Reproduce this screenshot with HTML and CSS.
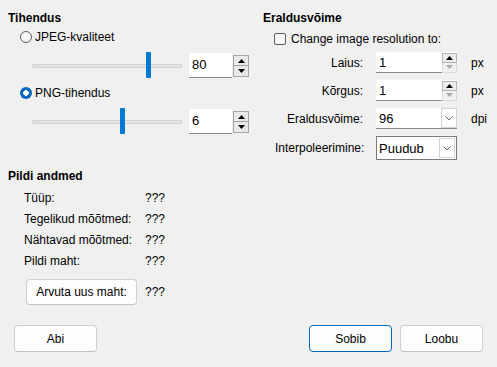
FILE: index.html
```html
<!DOCTYPE html>
<html>
<head>
<meta charset="utf-8">
<link rel="stylesheet" href="styles.css">
</head>
<body>
<div class="dlg">
  <div class="top">
    <section class="col">
      <div class="title">Tihendus</div>
      <div class="opt-row"><span class="radio"></span><span>JPEG-kvaliteet</span></div>
      <div class="slider-row">
        <div class="slider"><div class="track"></div><div class="thumb" style="left:114px"></div></div>
        <div class="spin">
          <div class="field">80</div>
          <div class="spin-btns">
            <span class="sb"><svg width="7" height="4" viewBox="0 0 7 4"><path d="M0 4 L3.5 0 L7 4 Z" fill="#000"/></svg></span>
            <span class="sb"><svg width="7" height="4" viewBox="0 0 7 4"><path d="M0 0 L3.5 4 L7 0 Z" fill="#000"/></svg></span>
          </div>
        </div>
      </div>
      <div class="opt-row"><span class="radio on"></span><span>PNG-tihendus</span></div>
      <div class="slider-row">
        <div class="slider"><div class="track"></div><div class="thumb" style="left:88px"></div></div>
        <div class="spin">
          <div class="field">6</div>
          <div class="spin-btns">
            <span class="sb"><svg width="7" height="4" viewBox="0 0 7 4"><path d="M0 4 L3.5 0 L7 4 Z" fill="#000"/></svg></span>
            <span class="sb"><svg width="7" height="4" viewBox="0 0 7 4"><path d="M0 0 L3.5 4 L7 0 Z" fill="#000"/></svg></span>
          </div>
        </div>
      </div>
    </section>
    <section class="col right">
      <div class="title">Eraldusvõime</div>
      <div class="opt-row chk-row"><span class="check"></span><span>Change image resolution to:</span></div>
      <div class="res-grid">
        <span class="lbl">Laius:</span>
        <div class="rfield"><span class="val">1</span>
          <div class="rspin">
            <span class="rb"><svg width="7" height="4" viewBox="0 0 7 4"><path d="M0 4 L3.5 0 L7 4 Z" fill="#000"/></svg></span>
            <span class="rb dis"><svg width="7" height="4" viewBox="0 0 7 4"><path d="M0 0 L3.5 4 L7 0 Z" fill="#a8a8a8"/></svg></span>
          </div>
        </div>
        <span class="unit">px</span>

        <span class="lbl">Kõrgus:</span>
        <div class="rfield"><span class="val">1</span>
          <div class="rspin">
            <span class="rb"><svg width="7" height="4" viewBox="0 0 7 4"><path d="M0 4 L3.5 0 L7 4 Z" fill="#000"/></svg></span>
            <span class="rb dis"><svg width="7" height="4" viewBox="0 0 7 4"><path d="M0 0 L3.5 4 L7 0 Z" fill="#a8a8a8"/></svg></span>
          </div>
        </div>
        <span class="unit">px</span>

        <span class="lbl">Eraldusvõime:</span>
        <div class="rfield combo"><span class="val">96</span>
          <span class="drop"><svg width="8" height="5" viewBox="0 0 8 5"><path d="M0.5 0.5 L4 4 L7.5 0.5" fill="none" stroke="#606060" stroke-width="1"/></svg></span>
        </div>
        <span class="unit">dpi</span>

        <span class="lbl">Interpoleerimine:</span>
        <div class="rfield combo boxed"><span class="val">Puudub</span>
          <span class="drop"><svg width="8" height="5" viewBox="0 0 8 5"><path d="M0.5 0.5 L4 4 L7.5 0.5" fill="none" stroke="#606060" stroke-width="1"/></svg></span>
        </div>
        <span class="unit"></span>
      </div>
    </section>
  </div>

  <section class="info">
    <div class="title">Pildi andmed</div>
    <div class="info-grid">
      <span>Tüüp:</span><span>???</span>
      <span>Tegelikud mõõtmed:</span><span>???</span>
      <span>Nähtavad mõõtmed:</span><span>???</span>
      <span>Pildi maht:</span><span>???</span>
    </div>
    <div class="calc-row">
      <button class="btn calc">Arvuta uus maht:</button>
      <span>???</span>
    </div>
  </section>

  <div class="footer">
    <button class="btn">Abi</button>
    <div class="spacer"></div>
    <button class="btn default">Sobib</button>
    <button class="btn">Loobu</button>
  </div>
</div>
</body>
</html>
```

FILE: styles.css
```css
* { box-sizing: border-box; }

body {
  margin: 0;
  background: #f0f0f0;
  font: 12px "Liberation Sans", Arial, sans-serif;
  color: #000;
}

.dlg {
  width: 497px;
  height: 367px;
  padding: 10px 14px 0 8px;
  display: flex;
  flex-direction: column;
}

.top {
  display: grid;
  grid-template-columns: 254px 1fr;
  height: 150px;
}

.col {
  display: flex;
  flex-direction: column;
}

.title {
  font-weight: bold;
  line-height: 16px;
  height: 16px;
}

.right .title { margin-left: 1px; }

.opt-row {
  display: flex;
  align-items: center;
  height: 16px;
  margin: 3px 0 0 12px;
  gap: 3px;
  line-height: 16px;
}

.radio {
  width: 12px;
  height: 12px;
  border-radius: 50%;
  border: 1px solid #5c5c5c;
  background: #f6f6f6;
  flex: none;
}

.radio.on {
  border: none;
  background: radial-gradient(circle, #fff 0 2.6px, #0067c0 3px);
}

.slider-row {
  display: flex;
  height: 26px;
  margin-top: 7px;
  padding-left: 24px;
}

.opt-row + .slider-row { margin-top: 7px; }
.slider-row + .opt-row { margin-top: 7px; }

.slider {
  position: relative;
  width: 150px;
  height: 26px;
}

.track {
  margin-top: 12px;
  height: 4px;
  background: #e4e4e4;
  border: 1px solid #d4d4d4;
}

.thumb {
  position: absolute;
  top: 0;
  width: 5px;
  height: 26px;
  background: #0078d4;
  border-radius: 1px;
}

.spin {
  display: flex;
  margin-left: 7px;
}

.field {
  width: 43px;
  height: 25px;
  margin-top: 1px;
  background: #fff;
  border-bottom: 1px solid #8a8a8a;
  padding-left: 3px;
  line-height: 24px;
  font-size: 13px;
}

.spin-btns {
  display: flex;
  flex-direction: column;
  margin: 3px 0 0 1px;
  width: 16px;
}

.sb {
  height: 11px;
  border: 1px solid #a6a6a6;
  background: #e9e9e9;
  display: flex;
  align-items: center;
  justify-content: center;
}

.sb + .sb { border-top: none; height: 11px; }

.chk-row {
  margin-top: 5px;
  gap: 5px;
}

.check {
  width: 12px;
  height: 12px;
  border: 1px solid #5c5c5c;
  border-radius: 2px;
  background: #f6f6f6;
  flex: none;
}

.res-grid {
  display: grid;
  grid-template-columns: 89px 81px auto;
  grid-template-rows: 21px 21px 21px 24px;
  column-gap: 12px;
  row-gap: 7px;
  margin: 5px 0 0 13px;
  align-items: center;
}

.lbl {
  text-align: right;
  white-space: nowrap;
  margin-right: 1px;
}

.unit { padding-left: 2px; }

.rfield {
  height: 100%;
  background: #fff;
  border-bottom: 1px solid #8a8a8a;
  display: flex;
  align-items: center;
  justify-content: space-between;
}

.val {
  padding-left: 3px;
  font-size: 13px;
}

.rspin {
  display: flex;
  flex-direction: column;
  width: 15px;
  height: 20px;
  margin-top: 1px;
}

.rb {
  height: 10px;
  border: 1px solid #b4b4b4;
  background: #ececec;
  display: flex;
  align-items: center;
  justify-content: center;
}

.rb.dis {
  border: 1px solid #dadada;
  border-top: none;
  background: #f0f0f0;
}

.drop {
  width: 16px;
  height: 20px;
  border: 1px solid #d4d4d4;
  background: #fff;
  display: flex;
  align-items: center;
  justify-content: center;
}

.combo.boxed {
  border: 1px solid #7a7a7a;
  padding-right: 1px;
}

.combo.boxed .val { padding-left: 2px; }

.info {
  margin-top: 8px;
  display: flex;
  flex-direction: column;
}

.info-grid {
  display: grid;
  grid-template-columns: 121px auto;
  grid-auto-rows: 16px;
  row-gap: 5px;
  margin: 6px 0 0 16px;
  line-height: 16px;
}

.calc-row {
  display: flex;
  align-items: center;
  gap: 8px;
  margin: 10px 0 0 18px;
}

.btn {
  font: inherit;
  color: #000;
  width: 83px;
  height: 27px;
  background: #fdfdfd;
  border: 1px solid #d0d0d0;
  border-bottom-color: #c2c2c2;
  border-radius: 4px;
  padding: 0;
}

.btn.calc {
  width: 111px;
  height: 26px;
}

.btn.default {
  border: 1px solid #0067c0;
}

.footer {
  display: flex;
  gap: 8px;
  margin: 20px 0 0 6px;
}

.spacer { flex: 1; }
```
